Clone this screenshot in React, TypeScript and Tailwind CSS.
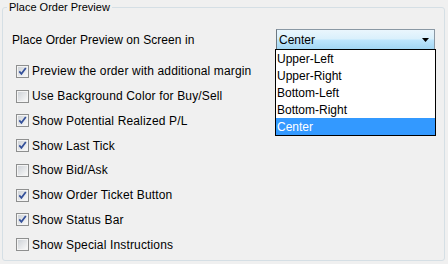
import React from "react";

function CheckBox({ checked }: { checked: boolean }) {
  return (
    <svg width="13" height="13" viewBox="0 0 13 13" className="shrink-0">
      <defs>
        <linearGradient id="cbg" x1="0" y1="0" x2="1" y2="1">
          <stop offset="0" stopColor="#cfd3d8" />
          <stop offset="1" stopColor="#f8f8f8" />
        </linearGradient>
      </defs>
      <rect x="0.5" y="0.5" width="12" height="12" fill="#f4f4f4" stroke="#8e8f8f" />
      <rect x="2" y="2" width="9" height="9" fill="url(#cbg)" />
      {checked && (
        <path d="M3.3 6.4 L5.4 8.8 L9.8 2.9" fill="none" stroke="#34509a" strokeWidth="1.7" />
      )}
    </svg>
  );
}

const rows: { label: string; checked: boolean }[] = [
  { label: "Preview the order with additional margin", checked: true },
  { label: "Use Background Color for Buy/Sell", checked: false },
  { label: "Show Potential Realized P/L", checked: true },
  { label: "Show Last Tick", checked: true },
  { label: "Show Bid/Ask", checked: false },
  { label: "Show Order Ticket Button", checked: true },
  { label: "Show Status Bar", checked: true },
  { label: "Show Special Instructions", checked: false },
];

const options = ["Upper-Left", "Upper-Right", "Bottom-Left", "Bottom-Right", "Center"];

export default function App() {
  return (
    <div
      className="w-[448px] h-[264px] bg-[#f0f0f0] text-black text-[12px] leading-none overflow-hidden pt-[7px] pl-[2px]"
      style={{ fontFamily: '"Liberation Sans", Arial, sans-serif' }}
    >
      <div className="relative w-[443px] h-[254px] border border-[#d5dfe5] rounded-[3px]">
        <div className="absolute left-[4px] top-[-8px] px-[2px] bg-[#f0f0f0] text-[11px] leading-[14px]">
          Place Order Preview
        </div>
        <div className="flex flex-col pt-[21px]">
          <div className="relative flex items-center justify-between pl-[9px] pr-[9px] h-[21px]">
            <span className="tracking-[0.05px]">Place Order Preview on Screen in</span>
            <div className="relative w-[159px] h-[21px]">
              <div className="flex items-center justify-between h-full border border-[#8a98a4] border-l-[#6d7880] bg-[linear-gradient(#eaf6fd_0%,#d9f0fc_48%,#bee6fd_52%,#a2d6f3_100%)] pl-[2px] pr-[5px]">
                <span>Center</span>
                <svg width="7" height="4" viewBox="0 0 7 4">
                  <path d="M0 0 H7 L3.5 4 Z" fill="#000" />
                </svg>
              </div>
              <div className="absolute left-[-1px] top-[20px] w-[161px] border border-black bg-white z-10 flex flex-col">
                {options.map((o) => (
                  <div
                    key={o}
                    className={
                      o === "Center"
                        ? "h-[17px] flex items-center pl-[1px] bg-[#3399ff] text-white"
                        : "h-[17px] flex items-center pl-[1px]"
                    }
                  >
                    {o}
                  </div>
                ))}
              </div>
            </div>
          </div>
          <div className="flex flex-col pt-[9px]">
            {rows.map((r) => (
              <div key={r.label} className="h-[24.75px] flex items-center pl-[13px] gap-[3px]">
                <CheckBox checked={r.checked} />
                <span className="tracking-[0.15px]">{r.label}</span>
              </div>
            ))}
          </div>
        </div>
      </div>
    </div>
  );
}
